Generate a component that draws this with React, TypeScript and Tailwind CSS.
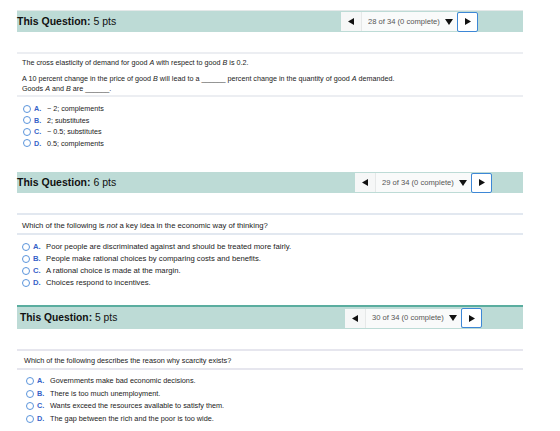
import type { ReactNode } from 'react'

interface NavProps {
  current: number
}

const Nav: React.FC<NavProps> = ({ current }) => {
  return (
    <div className="flex shrink-0 items-center h-[19px]">
      <div className="flex shrink-0 items-center justify-center w-[20px] h-full bg-[#f6f7f7]">
        <svg width="6" height="7" viewBox="0 0 6 7">
          <polygon points="6,0 6,7 0,3.5" fill="#111" />
        </svg>
      </div>
      <div className="flex shrink-0 items-center justify-between w-[96px] h-full bg-[#f9fafa] border-l border-[#e6e8e8] pl-[6px] pr-[4px] text-[7.6px] text-[#555] whitespace-nowrap">
        <span>{current} of 34 (0 complete)</span>
        <svg width="8" height="6" viewBox="0 0 8 6">
          <polygon points="0,0 8,0 4,6" fill="#111" />
        </svg>
      </div>
      <div className="flex shrink-0 items-center justify-center w-[21px] h-[20px] bg-white border-[1.5px] border-[#3d87d6] rounded-[2px]">
        <svg width="6" height="7" viewBox="0 0 6 7">
          <polygon points="0,0 0,7 6,3.5" fill="#111" />
        </svg>
      </div>
    </div>
  )
}

interface OptionProps {
  letter: string
  children: ReactNode
}

const Option: React.FC<OptionProps> = ({ letter, children }) => (
  <div className="flex items-center">
    <span className="shrink-0 w-[8px] h-[8px] rounded-full border border-[#5b95dc] bg-white" />
    <span className="shrink-0 w-[13px] ml-[3px] font-bold text-[#3561c8]">{letter}.</span>
    <span>{children}</span>
  </div>
)

export default function App() {
  return (
    <div className="w-[560px] h-[431px] bg-white overflow-hidden text-[#222] font-['Liberation_Sans',Arial,sans-serif]">
      {/* question 28 */}
      <div className="ml-[17px] mr-[37px] pt-[10px]">
        <div className="flex items-center justify-between h-[22px] border-t border-[#e4e9e9] bg-[#bddbd6] pr-[45px]">
          <div className="text-[10.5px] text-[#111] whitespace-nowrap">
            <span className="font-bold">This Question:</span> 5 pts
          </div>
          <Nav current={28} />
        </div>
        <div className="h-[2px] bg-[#eceef2] mt-[20px]" />
        <div className="pl-[5px] text-[7.2px] leading-[10px]">
          <p className="mt-[4px]">
            The cross elasticity of demand for good <i>A</i> with respect to good <i>B</i> is 0.2.
          </p>
          <p className="mt-[6px]">
            A 10 percent change in the price of good <i>B</i> will lead to a ______ percent change in the quantity of good <i>A</i> demanded.
            <br />
            Goods <i>A</i> and <i>B</i> are ______.
          </p>
        </div>
        <div className="h-[2px] bg-[#eceef2] mt-[1px]" />
        <div className="mt-[6px] pl-[6px] text-[7.2px] leading-[11.5px]">
          <Option letter="A">&minus; 2; complements</Option>
          <Option letter="B">2; substitutes</Option>
          <Option letter="C">&minus; 0.5; substitutes</Option>
          <Option letter="D">0.5; complements</Option>
        </div>
      </div>

      {/* question 29 */}
      <div className="ml-[17px] mr-[37px] mt-[23px]">
        <div className="flex items-center justify-between h-[21px] bg-[#bddbd6] pr-[31px]">
          <div className="text-[10.5px] text-[#111] whitespace-nowrap">
            <span className="font-bold">This Question:</span> 6 pts
          </div>
          <Nav current={29} />
        </div>
        <div className="h-[2px] bg-[#e2e8f0] mt-[20px]" />
        <div className="pl-[5px] text-[7.7px] leading-[10px] mt-[6px]">
          Which of the following is <i>not</i> a key idea in the economic way of thinking?
        </div>
        <div className="h-[2px] bg-[#e2e8f0] mt-[2px]" />
        <div className="mt-[6px] pl-[5px] text-[7.7px] leading-[12px]">
          <Option letter="A">Poor people are discriminated against and should be treated more fairly.</Option>
          <Option letter="B">People make rational choices by comparing costs and benefits.</Option>
          <Option letter="C">A rational choice is made at the margin.</Option>
          <Option letter="D">Choices respond to incentives.</Option>
        </div>
      </div>

      {/* question 30 */}
      <div className="ml-[17px] mr-[37px] mt-[16px]">
        <div className="flex items-center justify-between h-[24px] border-t-2 border-[#5aad9f] bg-[#bddbd6] pl-[3px] pr-[41px]">
          <div className="text-[10.3px] text-[#111] whitespace-nowrap">
            <span className="font-bold">This Question:</span> 5 pts
          </div>
          <Nav current={30} />
        </div>
        <div className="h-[2px] bg-[#e6e6ee] mt-[20px]" />
        <div className="pl-[7px] text-[7.3px] leading-[10px] mt-[5px]">
          Which of the following describes the reason why scarcity exists?
        </div>
        <div className="h-[2px] bg-[#e6e6ee] mt-[2px]" />
        <div className="mt-[5px] pl-[9px] text-[7.3px] leading-[12.6px]">
          <Option letter="A">Governments make bad economic decisions.</Option>
          <Option letter="B">There is too much unemployment.</Option>
          <Option letter="C">Wants exceed the resources available to satisfy them.</Option>
          <Option letter="D">The gap between the rich and the poor is too wide.</Option>
        </div>
      </div>
    </div>
  )
}
